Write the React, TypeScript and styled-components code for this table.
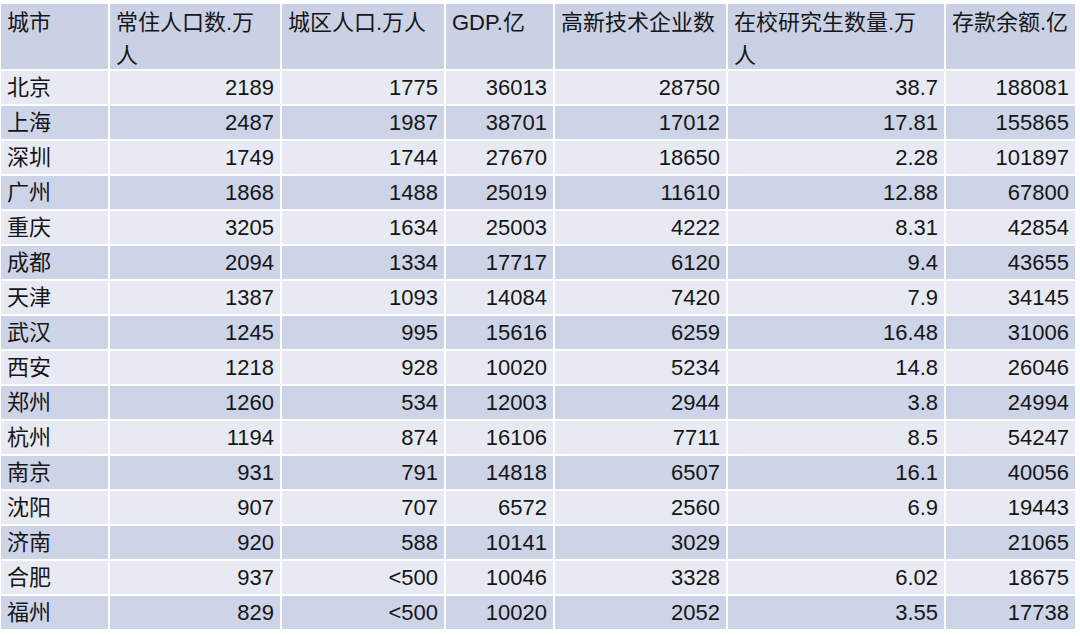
import React from "react";
import styled, { createGlobalStyle } from "styled-components";

const GlobalStyle = createGlobalStyle`
    html, body {
        margin: 0;
        padding: 0;
        background: #ffffff;
    }
    body {
        font-family: "Liberation Sans", "Noto Sans CJK SC", sans-serif;
        color: #161616;
    }
`;

const COLUMNS = [107, 170, 162, 107, 171, 216, 129];

const HEADERS: React.ReactNode[] = [
    "城市",
    <>常住人口数.万<br />人</>,
    "城区人口.万人",
    "GDP.亿",
    "高新技术企业数",
    <>在校研究生数量.万<br />人</>,
    "存款余额.亿",
];

const ROWS: string[][] = [
    ["北京", "2189", "1775", "36013", "28750", "38.7", "188081"],
    ["上海", "2487", "1987", "38701", "17012", "17.81", "155865"],
    ["深圳", "1749", "1744", "27670", "18650", "2.28", "101897"],
    ["广州", "1868", "1488", "25019", "11610", "12.88", "67800"],
    ["重庆", "3205", "1634", "25003", "4222", "8.31", "42854"],
    ["成都", "2094", "1334", "17717", "6120", "9.4", "43655"],
    ["天津", "1387", "1093", "14084", "7420", "7.9", "34145"],
    ["武汉", "1245", "995", "15616", "6259", "16.48", "31006"],
    ["西安", "1218", "928", "10020", "5234", "14.8", "26046"],
    ["郑州", "1260", "534", "12003", "2944", "3.8", "24994"],
    ["杭州", "1194", "874", "16106", "7711", "8.5", "54247"],
    ["南京", "931", "791", "14818", "6507", "16.1", "40056"],
    ["沈阳", "907", "707", "6572", "2560", "6.9", "19443"],
    ["济南", "920", "588", "10141", "3029", "", "21065"],
    ["合肥", "937", "<500", "10046", "3328", "6.02", "18675"],
    ["福州", "829", "<500", "10020", "2052", "3.55", "17738"],
];

const Table = styled.div`
    display: grid;
    grid-template-columns: ${COLUMNS.map((w) => `${w}px`).join(" ")};
    grid-template-rows: 65px;
    grid-auto-rows: 33px;
    gap: 2px;
    padding: 4px 0 0 1px;
    font-size: 22px;
`;

const HeaderCell = styled.div`
    box-sizing: border-box;
    padding: 2px 6px 0 6px;
    line-height: 33px;
    white-space: nowrap;
    background: #cbd1e5;
`;

const Cell = styled.div<{ $even: boolean; $right: boolean }>`
    padding: 0 6px;
    line-height: 33px;
    white-space: nowrap;
    text-align: ${(p) => (p.$right ? "right" : "left")};
    background: ${(p) => (p.$even ? "#ced4e8" : "#e8eaf3")};
`;

export default function App() {
    return (
        <>
            <GlobalStyle />
            <Table>
                {HEADERS.map((h, i) => (
                    <HeaderCell key={`h${i}`}>{h}</HeaderCell>
                ))}
                {ROWS.map((row, r) =>
                    row.map((value, c) => (
                        <Cell key={`${r}-${c}`} $even={r % 2 === 1} $right={c > 0}>
                            {value}
                        </Cell>
                    ))
                )}
            </Table>
        </>
    );
}
